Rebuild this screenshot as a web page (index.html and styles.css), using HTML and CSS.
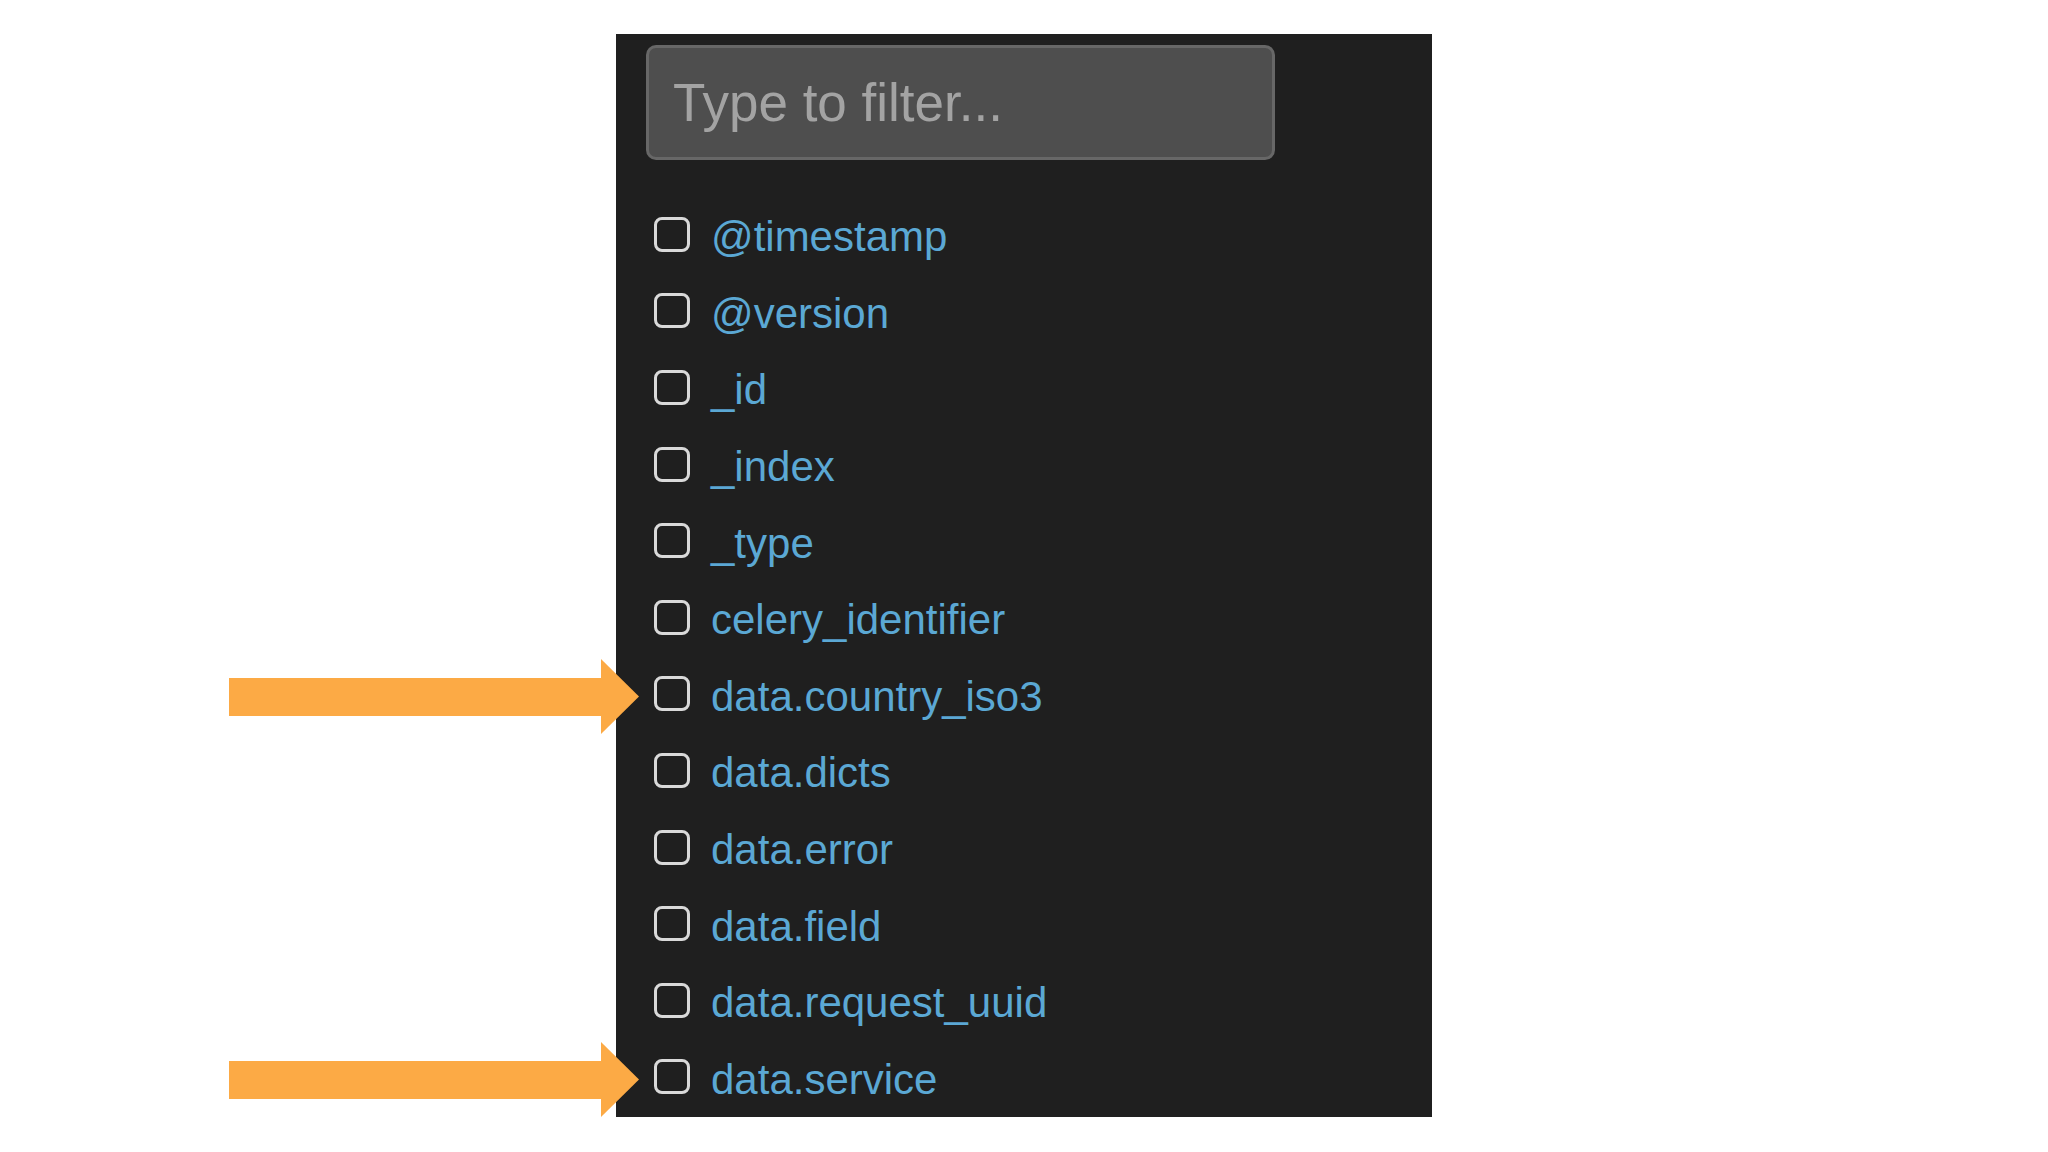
FILE: index.html
```html
<!DOCTYPE html>
<html lang="en">
<head>
<meta charset="utf-8">
<title>Field filter</title>
<link rel="stylesheet" href="styles.css">
</head>
<body>
<div class="page">
  <div class="panel">
    <input class="filter" type="text" placeholder="Type to filter...">
    <ul class="fields">
      <li class="field"><span class="box"></span><span class="name">@timestamp</span></li>
      <li class="field"><span class="box"></span><span class="name">@version</span></li>
      <li class="field"><span class="box"></span><span class="name">_id</span></li>
      <li class="field"><span class="box"></span><span class="name">_index</span></li>
      <li class="field"><span class="box"></span><span class="name">_type</span></li>
      <li class="field"><span class="box"></span><span class="name">celery_identifier</span></li>
      <li class="field">
        <svg class="arrow" width="410" height="75" viewBox="0 0 410 75"><rect x="0" y="19" width="374" height="38" fill="#fcaa45"/><polygon points="372,0 410,37.5 372,75" fill="#fcaa45"/></svg>
        <span class="box"></span><span class="name">data.country_iso3</span></li>
      <li class="field"><span class="box"></span><span class="name">data.dicts</span></li>
      <li class="field"><span class="box"></span><span class="name">data.error</span></li>
      <li class="field"><span class="box"></span><span class="name">data.field</span></li>
      <li class="field"><span class="box"></span><span class="name">data.request_uuid</span></li>
      <li class="field">
        <svg class="arrow" width="410" height="75" viewBox="0 0 410 75"><rect x="0" y="19" width="374" height="38" fill="#fcaa45"/><polygon points="372,0 410,37.5 372,75" fill="#fcaa45"/></svg>
        <span class="box"></span><span class="name">data.service</span></li>
    </ul>
  </div>
</div>
</body>
</html>
```

FILE: styles.css
```css
html, body {
  margin: 0;
  padding: 0;
  background: #ffffff;
}

.page {
  width: 2048px;
  height: 1152px;
  padding: 34px 0 0 616px;
  box-sizing: border-box;
  font-family: "Liberation Sans", Arial, sans-serif;
}

.panel {
  width: 816px;
  height: 1083px;
  box-sizing: border-box;
  background: #1f1f1f;
  padding: 11px 0 0 30px;
  display: flex;
  flex-direction: column;
}

.filter {
  width: 629px;
  height: 115px;
  box-sizing: border-box;
  margin: 0;
  background: #4e4e4e;
  border: 3px solid #676767;
  border-radius: 10px;
  padding: 0 0 0 24px;
  font-family: "Liberation Sans", Arial, sans-serif;
  font-size: 53px;
  color: #dddddd;
  outline: none;
}

.filter::placeholder {
  color: #a3a3a3;
  opacity: 1;
}

.fields {
  list-style: none;
  margin: 36px 0 0 0;
  padding: 0;
  display: flex;
  flex-direction: column;
}

.field {
  position: relative;
  height: 76.6px;
  display: flex;
  align-items: center;
  gap: 21px;
  padding-left: 8px;
}

.box {
  width: 36px;
  height: 35px;
  box-sizing: border-box;
  border: 3px solid #d9d9d9;
  border-radius: 8px;
  flex: none;
}

.name {
  font-size: 42px;
  color: #5ba8d4;
  padding-top: 6px;
  white-space: nowrap;
}

.arrow {
  position: absolute;
  left: -417px;
  top: 50%;
  margin-top: -35px;
  display: block;
}
```
